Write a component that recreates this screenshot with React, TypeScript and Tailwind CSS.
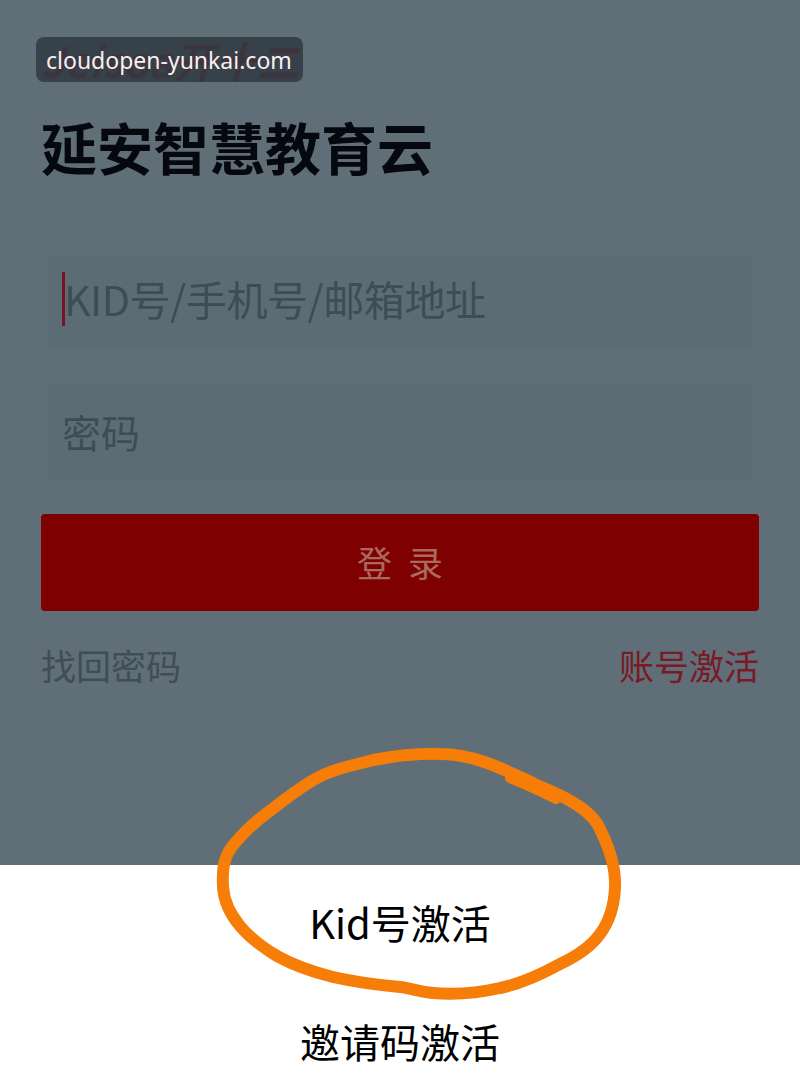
export default function App() {
  const font = { fontFamily: '"Noto Sans CJK SC", "Noto Sans", sans-serif' };
  return (
    <div className="relative w-[800px] h-[1079px] overflow-hidden bg-white" style={font}>
      <div className="h-[865px] bg-[#5f6e77] px-[41px] pt-[37px] flex flex-col">
        <div className="relative h-[45px] w-[262px]">
          <div className="h-[45px] leading-[45px] italic font-bold text-[42px] text-[#7a1f2e] whitespace-nowrap">Jeisoa开十二</div>
          <div className="absolute -left-[5px] top-0 w-[267px] h-[45px] rounded-[8px] bg-[#2f3942]/85 text-[#fdeeee] text-[23px] leading-[47px] pl-[10px] whitespace-nowrap" style={{ fontFamily: '"Noto Sans", sans-serif' }}>cloudopen-yunkai.com</div>
        </div>
        <div className="mt-[24px] text-[56px] leading-[80px] font-bold text-[#05090f] whitespace-nowrap">延安智慧教育云</div>
        <div className="mt-[69px] ml-[7px] mr-[7px] h-[95px] bg-[#5c6c74] flex items-center pl-[14px] pb-[8px]">
          <div className="w-[3px] h-[54px] bg-[#741626]" />
          <span className="text-[41px] text-[#3e4c56] whitespace-nowrap tracking-[-0.4px] -ml-[1px]">KID号/手机号/邮箱地址</span>
        </div>
        <div className="mt-[35px] ml-[7px] mr-[7px] h-[95px] bg-[#5c6c74] flex items-center pl-[14px] pb-[2px]">
          <span className="text-[39px] text-[#3e4c56] whitespace-nowrap">密码</span>
        </div>
        <div className="mt-[34px] h-[97px] w-[718px] rounded-[4px] bg-[#7f0000] flex items-center justify-center text-[#a9695f] text-[35px] gap-[16px]">
          <span>登</span>
          <span>录</span>
        </div>
        <div className="mt-[28px] w-[718px] flex items-center justify-between text-[35px] leading-[52px]">
          <span className="text-[#404d56]">找回密码</span>
          <span className="text-[#7a1a27]">账号激活</span>
        </div>
      </div>
      <div className="h-[214px] flex flex-col items-center text-black">
        <div className="mt-[28px] h-[58px] leading-[58px] text-[40px] whitespace-nowrap">Kid号激活</div>
        <div className="mt-[60px] h-[60px] leading-[60px] text-[40px] whitespace-nowrap">邀请码激活</div>
      </div>
      <svg className="absolute left-0 top-0 pointer-events-none" width="800" height="1079" viewBox="0 0 800 1079" fill="none">
        <path
          d="M440 754 C475 754 505 770 533 783 C545 789 556 793 567 799 C582 807 592 815 598 825 C608 845 616 865 615 888 C614 907 609 922 600 934 C590 948 575 957 560 964 C540 975 520 984 500 988 C478 993 455 995 433 993 C420 992 410 988 400 987 C378 985 355 982 333 977 C313 972 295 966 277 956 C262 947 250 938 240 926 C230 914 224 902 223 887 C222 868 224 855 235 843 C245 831 255 822 267 813 C283 801 300 787 317 778 C335 768 355 765 373 760 C395 756 418 753 440 754 Z"
          stroke="#f67d08"
          strokeWidth="12"
          strokeLinejoin="round"
        />
        <path d="M510 778 C525 784 540 791 556 799" stroke="#f67d08" strokeWidth="10" strokeLinecap="round" />
      </svg>
    </div>
  );
}
